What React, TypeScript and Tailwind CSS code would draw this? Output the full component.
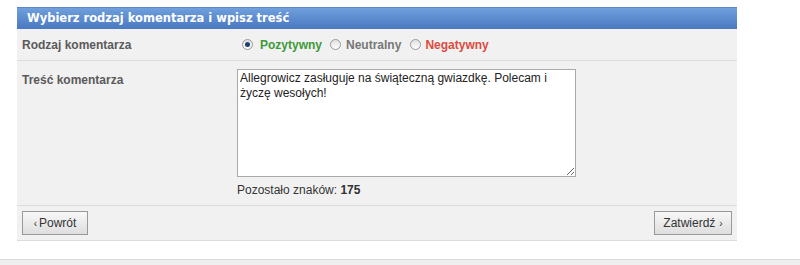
import { useState } from 'react';

export default function App() {
  const [text, setText] = useState('Allegrowicz zasługuje na świąteczną gwiazdkę. Polecam i życzę wesołych!');

  return (
    <div className="w-[800px] h-[265px] bg-white flex flex-col font-['Liberation_Sans',Arial,sans-serif] overflow-hidden">
      <div className="pt-[7px] pl-[17px]">
        <div className="w-[720px] bg-[#f1f1f1] border-b border-[#dcdcdc]">
          {/* header bar */}
          <div className="h-[22px] bg-gradient-to-b from-[#6f9fdc] to-[#4a78c2] border-t border-[#5a86c8] flex items-center pl-[10px]">
            <span className="font-['DejaVu_Sans',Verdana,sans-serif] font-bold text-[11.5px] text-white">
              Wybierz rodzaj komentarza i wpisz treść
            </span>
          </div>

          {/* rodzaj */}
          <div className="flex h-[32px] items-center border-b border-[#dcdcdc]">
            <div className="w-[220px] pl-[5px] text-[12px] font-bold text-[#5a5a5a]">Rodzaj komentarza</div>
            <div className="flex items-center pl-[5px] text-[12px] font-bold">
              <Radio checked />
              <span className="ml-[7px] text-[#3d9a37]">Pozytywny</span>
              <Radio className="ml-[8px]" />
              <span className="ml-[5px] text-[#777]">Neutralny</span>
              <Radio className="ml-[9px]" />
              <span className="ml-[4px] text-[#dd4b40]">Negatywny</span>
            </div>
          </div>

          {/* treść */}
          <div className="flex border-b border-[#dcdcdc] pt-[8px] pb-[6px]">
            <div className="w-[220px] pl-[5px] pt-[2px] text-[12px] font-bold text-[#5a5a5a]">Treść komentarza</div>
            <div className="flex flex-col">
              <textarea
                value={text}
                onChange={(e) => setText(e.target.value)}
                className="w-[339px] h-[108px] bg-white border border-[#a9a9a9] px-[2px] pt-[1px] text-[12px] leading-[15px] text-[#222] resize outline-none font-['Liberation_Sans',Arial,sans-serif]"
              />
              <div className="mt-[4px] text-[12px] text-[#333]">
                Pozostało znaków: <b>175</b>
              </div>
            </div>
          </div>

          {/* buttons */}
          <div className="flex justify-between items-center h-[34px] px-[5px]">
            <button className="h-[24px] w-[66px] border border-[#999] bg-gradient-to-b from-[#f8f8f8] to-[#dedede] text-[12px] text-[#333] flex items-center justify-center">
              <span className="text-[10px] mr-[2px]">‹</span>Powrót
            </button>
            <button className="h-[24px] w-[78px] border border-[#999] bg-gradient-to-b from-[#f8f8f8] to-[#dedede] text-[12px] text-[#333] flex items-center justify-center">
              Zatwierdź<span className="text-[10px] ml-[4px]">›</span>
            </button>
          </div>
        </div>
      </div>

      <div className="mt-auto h-[6px] border-t border-[#d8d8d8] bg-[#efefef]" />
    </div>
  );
}

function Radio({ checked = false, className = '' }: { checked?: boolean; className?: string }) {
  return (
    <span
      className={`w-[11px] h-[11px] rounded-full border border-[#9a9a9a] bg-gradient-to-b from-[#e2e2e2] to-[#fdfdfd] flex items-center justify-center ${className}`}
    >
      {checked && <span className="w-[5px] h-[5px] rounded-full bg-[#1d3f72]" />}
    </span>
  );
}
